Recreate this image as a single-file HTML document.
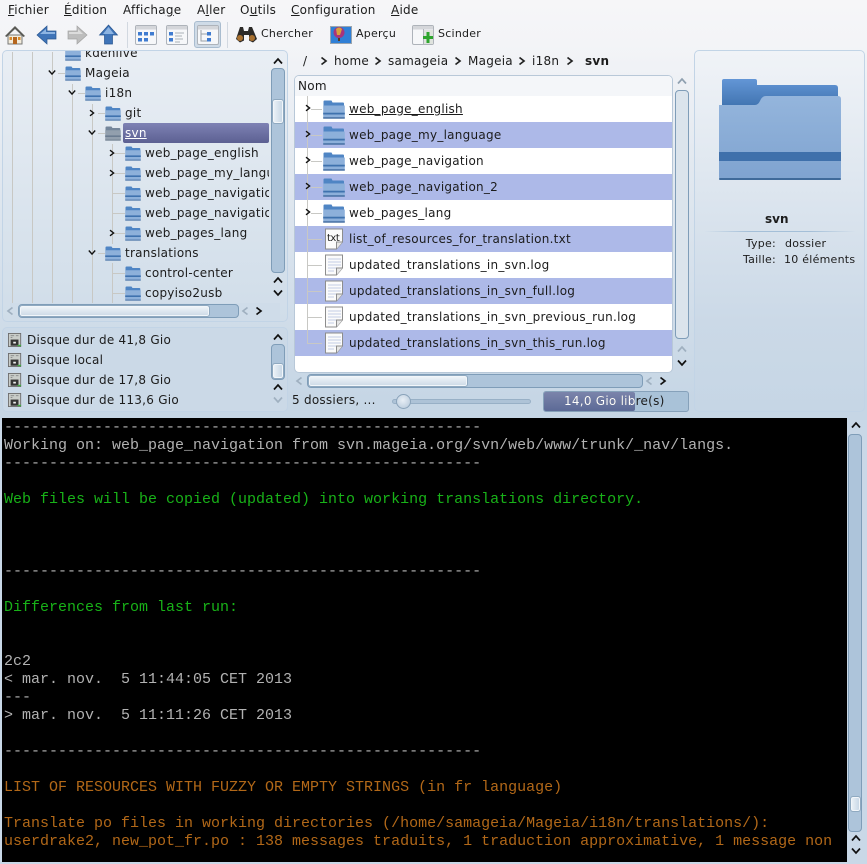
<!DOCTYPE html>
<html><head><meta charset="utf-8"><title>Dolphin</title>
<style>
html,body{margin:0;padding:0}
body{width:867px;height:864px;overflow:hidden;position:relative;background:#c9d8e7;font-family:"DejaVu Sans",sans-serif;font-size:12px;letter-spacing:.25px;color:#1c1c1c}
#bg{position:absolute;left:0;top:0;width:867px;height:420px;background:linear-gradient(#f6f6f8 0,#f3f4f7 45px,#e4eaf1 150px,#c6d6e5 400px)}
.t{position:absolute;white-space:nowrap;line-height:16px;height:16px}
.a{position:absolute}
u{text-decoration:underline}
.panel{position:absolute;border:1px solid #c2d4e6;border-radius:5px;box-sizing:border-box;overflow:hidden}
.track{position:absolute;background:#adc4da;border:1px solid #7f9db8;border-radius:4px;box-sizing:border-box}
.handle{position:absolute;background:linear-gradient(90deg,#e9f0f6,#c9d8e6);border:1px solid #f2f6fa;outline:1px solid #8fa9c0;border-radius:2px;box-sizing:border-box}
.hh{background:linear-gradient(#eef3f8,#cfdce8)}
.row{position:absolute;left:0;width:378px;height:26px}
.alt{background:#adb9e8}
.line{position:absolute;background:#c8c8c4}
.term{position:absolute;left:4px;white-space:pre;font-family:"Liberation Mono",monospace;font-size:15px;letter-spacing:0;line-height:18px;height:18px;color:#b2b2b2}
.g{color:#18b218}.o{color:#b26818}
svg{position:absolute;overflow:visible}
</style></head><body>
<div id="bg"></div>
<svg width="0" height="0" style="position:absolute">
<defs>
<linearGradient id="fg" x1="0" y1="0" x2="0" y2="1"><stop offset="0" stop-color="#94b5dc"/><stop offset="1" stop-color="#7fa3d0"/></linearGradient>
<linearGradient id="bk" x1="0" y1="0" x2="0" y2="1"><stop offset="0" stop-color="#6396d6"/><stop offset="1" stop-color="#3f72ae"/></linearGradient>
<symbol id="f" viewBox="0 0 16 16"><path d="M0.5 2.5q0-1 1-1h5l1 1.5h7q.8 0 .8 .8V6H0.5z" fill="#4f85c4"/><path d="M0.2 5.2h15.6v9.6q0 .8-.8.8H1q-.8 0-.8-.8z" fill="#8db0da"/><rect x=".2" y="10.4" width="15.6" height="1.6" fill="#3f72ae"/><rect x=".2" y="14.6" width="15.6" height="1" fill="#4e76a6"/></symbol>
<symbol id="fb" viewBox="0 0 22 22"><path d="M.5 3.5q0-1 1-1h7l1 2h10.500q1 0 1 1V8H.5z" fill="#4f85c4"/><path d="M.2 7.500h21.600v12q0 1-1 1H1.200q-1 0-1-1z" fill="#8db0da"/><rect x=".2" y="14.700" width="21.600" height="1.800" fill="#3f72ae"/><rect x=".2" y="19.300" width="21.600" height="1.400" fill="#3f6a9e"/></symbol>
<symbol id="d" viewBox="0 0 20 22"><path d="M1.500 1h17v13l-6 7h-11z" fill="#fbfbfb" stroke="#8d8d8d"/><path d="M4 5h13M4 8h13M4 11h13M4 14h8M4 17h6" stroke="#c3cde6"/><path d="M12.500 21v-7h6" fill="#e6e6e6" stroke="#8d8d8d"/></symbol>
<symbol id="h" viewBox="0 0 16 16"><rect x=".5" y=".5" width="14" height="15" fill="#c9ccc8" stroke="#6a6a6a"/><rect x="3" y="7.500" width="9" height="7" fill="#333"/><rect x="6" y="10" width="3" height="2" fill="#eee"/><rect x="11" y="13.500" width="4" height="1.500" fill="#3fae3f"/><path d="M3 3h4M9 3h3M3 5h2" stroke="#888"/></symbol>
<symbol id="v" viewBox="0 0 22 20"><rect x=".5" y=".5" width="21" height="19" rx="1.500" fill="#f6f7f9" stroke="#aeb3ba"/><rect x="1" y="1" width="20" height="3.500" fill="#d4d6da"/></symbol>
<symbol id="r" viewBox="0 0 8 10"><path d="M1.500 1.500L6 5L1.500 8.500" fill="none" stroke="currentColor" stroke-width="1.700"/></symbol>
<symbol id="l" viewBox="0 0 8 10"><path d="M6.500 1.500L2 5L6.500 8.500" fill="none" stroke="currentColor" stroke-width="1.700"/></symbol>
<symbol id="u" viewBox="0 0 10 8"><path d="M1 6.500L5 2L9 6.500" fill="none" stroke="currentColor" stroke-width="1.700"/></symbol>
<symbol id="n" viewBox="0 0 10 8"><path d="M1 1.500L5 6L9 1.500" fill="none" stroke="currentColor" stroke-width="1.700"/></symbol>
</defs></svg>

<!-- menu -->
<div class="t" style="left:8px;top:2px"><u>F</u>ichier</div>
<div class="t" style="left:64px;top:2px"><u>É</u>dition</div>
<div class="t" style="left:123px;top:2px">Afficha<u>g</u>e</div>
<div class="t" style="left:197px;top:2px">A<u>l</u>ler</div>
<div class="t" style="left:240px;top:2px">O<u>u</u>tils</div>
<div class="t" style="left:291px;top:2px"><u>C</u>onfiguration</div>
<div class="t" style="left:391px;top:2px"><u>A</u>ide</div>

<!-- toolbar -->
<svg style="left:5px;top:25px" width="20" height="20" viewBox="0 0 20 20"><path d="M3 10h14v9H3z" fill="#f3ecdc" stroke="#777"/><path d="M0 11L10 1l10 10-1.500 1L10 4 1.500 12z" fill="#5a5a55"/><rect x="8" y="12" width="4" height="7" fill="#b5651d"/><rect x="4.500" y="12" width="2.500" height="3" fill="#d98a2c"/><rect x="13" y="12" width="2.500" height="3" fill="#d98a2c"/></svg>
<svg style="left:37px;top:26px" width="19" height="18" viewBox="0 0 19 18"><path d="M0 9L10 0v5h9v8h-9v5z" fill="#3f74b8" stroke="#28558f" stroke-width=".7"/><path d="M3 8L9 3v3h9v2z" fill="#8db4e2"/></svg>
<svg style="left:68px;top:26px" width="19" height="18" viewBox="0 0 19 18"><path d="M19 9L9 0v5H0v8h9v5z" fill="#bdbdbd" stroke="#a3a3a3" stroke-width=".7"/><path d="M1 6h9V3l5 5H1z" fill="#dcdcdc"/></svg>
<svg style="left:99px;top:25px" width="19" height="19" viewBox="0 0 19 19"><path d="M9.500 0L18.500 10h-5v9h-8v-9h-5z" fill="#3f74b8" stroke="#28558f" stroke-width=".7"/><path d="M9.500 2L15 9H4z" fill="#8db4e2"/></svg>
<div class="a" style="left:127px;top:22px;width:1px;height:26px;background:#d2d8e0"></div>

<svg style="left:135px;top:25px" width="22" height="20"><use href="#v" width="22" height="20"/><g fill="#3f7bd0"><rect x="3" y="7" width="4" height="3.500"/><rect x="9" y="7" width="4" height="3.500"/><rect x="15" y="7" width="4" height="3.500"/><rect x="3" y="13" width="4" height="3.500"/><rect x="9" y="13" width="4" height="3.500"/></g></svg>
<svg style="left:166px;top:25px" width="22" height="20"><use href="#v" width="22" height="20"/><g fill="#3f7bd0"><rect x="3" y="7" width="4" height="3.500"/><rect x="3" y="13" width="4" height="3.500"/></g><path d="M9 8h9M9 11h7M9 14h8M9 17h5" stroke="#aab0b8"/></svg>
<div class="a" style="left:194px;top:21px;width:27px;height:27px;box-sizing:border-box;background:#cfdbe7;border:1px solid #a9bccf;border-radius:3px"></div>
<svg style="left:197px;top:25px" width="22" height="20"><use href="#v" width="22" height="20"/><path d="M4 5v11h7M4 9h7" fill="none" stroke="#9aa0a8"/><g fill="#3f7bd0"><rect x="10" y="7" width="4" height="3.500"/><rect x="10" y="13" width="4" height="3.500"/></g></svg>
<div class="a" style="left:227px;top:22px;width:1px;height:26px;background:#d2d8e0"></div>

<svg style="left:235px;top:26px" width="22" height="17" viewBox="0 0 22 17"><path d="M5 1h3l1 4h4l1-4h3l5 12-4 3.500-4-2V9H9v5.500l-4 2-4-3.500z" fill="#2c2a28"/><circle cx="5" cy="12" r="3" fill="#a8702f"/><circle cx="17" cy="12" r="3" fill="#a8702f"/></svg>
<div class="t" style="left:261px;top:26px;font-size:11px">Chercher</div>
<svg style="left:330px;top:26px" width="22" height="18" viewBox="0 0 22 18"><rect x=".5" y=".5" width="21" height="17" fill="#2f7fd6" stroke="#9aa4ae"/><circle cx="9" cy="6.500" r="5.500" fill="#a8347c"/><path d="M6 3q3-3 6 0l-2 6H7z" fill="#d8a03c"/><rect x="8" y="12" width="2" height="3" fill="#5a3a1c"/></svg>
<div class="t" style="left:356px;top:26px;font-size:11px">Aperçu</div>
<svg style="left:412px;top:25px" width="22" height="20" viewBox="0 0 22 20"><use href="#v" width="22" height="20"/><rect x="11" y="5" width="10" height="14" fill="#dfe3de"/><path d="M11.500 4v15" stroke="#aeb3ba"/><path d="M16 7v11M11 12.500h10" stroke="#2ea52e" stroke-width="3"/></svg>
<div class="t" style="left:438px;top:26px;font-size:11px">Scinder</div>

<!-- tree panel -->
<div class="panel" style="left:2px;top:50px;width:286px;height:272px;background:linear-gradient(#e9eef4,#d0dde9)">
<div class="a" style="left:-3px;top:-51px;width:286px;height:360px">
<div class="line" style="left:12px;top:52px;width:1px;height:252px"></div>
<div class="line" style="left:32px;top:52px;width:1px;height:252px"></div>
<div class="line" style="left:52px;top:52px;width:1px;height:252px"></div>
<div class="line" style="left:72px;top:84px;width:1px;height:220px"></div>
<div class="line" style="left:92px;top:104px;width:1px;height:200px"></div>
<div class="line" style="left:112px;top:144px;width:1px;height:100px"></div>
<div class="line" style="left:112px;top:263px;width:1px;height:41px"></div>
<div class="line" style="left:58px;top:73px;width:7px;height:1px"></div>
<div class="line" style="left:78px;top:93px;width:7px;height:1px"></div>
<div class="line" style="left:98px;top:113px;width:7px;height:1px"></div>
<div class="line" style="left:98px;top:133px;width:7px;height:1px"></div>
<div class="line" style="left:98px;top:253px;width:7px;height:1px"></div>
<div class="line" style="left:112px;top:153px;width:13px;height:1px"></div>
<div class="line" style="left:112px;top:173px;width:13px;height:1px"></div>
<div class="line" style="left:112px;top:193px;width:13px;height:1px"></div>
<div class="line" style="left:112px;top:213px;width:13px;height:1px"></div>
<div class="line" style="left:112px;top:233px;width:13px;height:1px"></div>
<div class="line" style="left:112px;top:273px;width:13px;height:1px"></div>
<div class="line" style="left:112px;top:293px;width:13px;height:1px"></div>

<div class="a" style="left:123px;top:123px;width:146px;height:20px;background:linear-gradient(#7e82b4,#5c6092);border-radius:2px"></div>

<svg style="left:65px;top:45px" width="16" height="16"><use href="#f" width="16" height="16"/></svg><div class="t" style="left:85px;top:45px">kdenlive</div>
<svg style="left:65px;top:65px" width="16" height="16"><use href="#f" width="16" height="16"/></svg><div class="t" style="left:85px;top:65px">Mageia</div>
<svg style="left:85px;top:85px" width="16" height="16"><use href="#f" width="16" height="16"/></svg><div class="t" style="left:105px;top:85px">i18n</div>
<svg style="left:105px;top:105px" width="16" height="16"><use href="#f" width="16" height="16"/></svg><div class="t" style="left:125px;top:105px">git</div>
<svg style="left:105px;top:125px;opacity:.72;filter:grayscale(.45) brightness(.75)" width="16" height="16"><use href="#f" width="16" height="16"/></svg><div class="t" style="left:125px;top:125px;color:#fff"><u>svn</u></div>
<svg style="left:125px;top:145px" width="16" height="16"><use href="#f" width="16" height="16"/></svg><div class="t" style="left:145px;top:145px">web_page_english</div>
<svg style="left:125px;top:165px" width="16" height="16"><use href="#f" width="16" height="16"/></svg><div class="t" style="left:145px;top:165px;width:124px;overflow:hidden">web_page_my_language</div>
<svg style="left:125px;top:185px" width="16" height="16"><use href="#f" width="16" height="16"/></svg><div class="t" style="left:145px;top:185px;width:124px;overflow:hidden">web_page_navigation</div>
<svg style="left:125px;top:205px" width="16" height="16"><use href="#f" width="16" height="16"/></svg><div class="t" style="left:145px;top:205px;width:124px;overflow:hidden">web_page_navigation_2</div>
<svg style="left:125px;top:225px" width="16" height="16"><use href="#f" width="16" height="16"/></svg><div class="t" style="left:145px;top:225px">web_pages_lang</div>
<svg style="left:105px;top:245px" width="16" height="16"><use href="#f" width="16" height="16"/></svg><div class="t" style="left:125px;top:245px">translations</div>
<svg style="left:125px;top:265px" width="16" height="16"><use href="#f" width="16" height="16"/></svg><div class="t" style="left:145px;top:265px">control-center</div>
<svg style="left:125px;top:285px" width="16" height="16"><use href="#f" width="16" height="16"/></svg><div class="t" style="left:145px;top:285px">copyiso2usb</div>

<svg style="left:48px;top:69px" width="8" height="7" color="#111"><use href="#n" width="8" height="7"/></svg>
<svg style="left:68px;top:89px" width="8" height="7" color="#111"><use href="#n" width="8" height="7"/></svg>
<svg style="left:88px;top:109px" width="8" height="8" color="#111"><use href="#r" width="8" height="8"/></svg>
<svg style="left:88px;top:129px" width="8" height="7" color="#111"><use href="#n" width="8" height="7"/></svg>
<svg style="left:108px;top:149px" width="8" height="8" color="#111"><use href="#r" width="8" height="8"/></svg>
<svg style="left:108px;top:169px" width="8" height="8" color="#111"><use href="#r" width="8" height="8"/></svg>
<svg style="left:108px;top:229px" width="8" height="8" color="#111"><use href="#r" width="8" height="8"/></svg>
<svg style="left:88px;top:249px" width="8" height="7" color="#111"><use href="#n" width="8" height="7"/></svg>

<div class="a" style="left:10px;top:303px;width:270px;height:18px;background:#cfdce9"></div>
</div></div>
<svg style="left:273px;top:57px" width="10" height="8" color="#111"><use href="#u" width="10" height="8"/></svg>
<div class="track" style="left:271px;top:68px;width:14px;height:205px"></div>
<div class="handle" style="left:273px;top:100px;width:10px;height:23px"></div>
<svg style="left:273px;top:276px" width="10" height="8" color="#111"><use href="#u" width="10" height="8"/></svg>
<svg style="left:273px;top:289px" width="10" height="8" color="#111"><use href="#n" width="10" height="8"/></svg>
<svg style="left:6px;top:306px" width="8" height="10" color="#9fb0c0"><use href="#l" width="8" height="10"/></svg>
<div class="track" style="left:18px;top:304px;width:221px;height:14px"></div>
<div class="handle hh" style="left:20px;top:306px;width:189px;height:10px"></div>
<svg style="left:241px;top:306px" width="8" height="10" color="#9fb0c0"><use href="#l" width="8" height="10"/></svg>
<svg style="left:255px;top:306px" width="8" height="10" color="#111"><use href="#r" width="8" height="10"/></svg>

<!-- places -->
<div class="panel" style="left:2px;top:327px;width:286px;height:85px;background:#cbd9e7"></div>
<svg style="left:8px;top:332px" width="14" height="16"><use href="#h" width="14" height="16"/></svg><div class="t" style="left:27px;top:332px">Disque dur de 41,8 Gio</div>
<svg style="left:8px;top:352px" width="14" height="16"><use href="#h" width="14" height="16"/></svg><div class="t" style="left:27px;top:352px">Disque local</div>
<svg style="left:8px;top:372px" width="14" height="16"><use href="#h" width="14" height="16"/></svg><div class="t" style="left:27px;top:372px">Disque dur de 17,8 Gio</div>
<svg style="left:8px;top:392px" width="14" height="16"><use href="#h" width="14" height="16"/></svg><div class="t" style="left:27px;top:392px">Disque dur de 113,6 Gio</div>
<svg style="left:273px;top:333px" width="10" height="8" color="#111"><use href="#u" width="10" height="8"/></svg>
<div class="track" style="left:271px;top:344px;width:14px;height:36px"></div>
<div class="handle" style="left:273px;top:364px;width:10px;height:14px"></div>
<svg style="left:273px;top:383px" width="10" height="8" color="#111"><use href="#u" width="10" height="8"/></svg>
<svg style="left:273px;top:396px" width="10" height="8" color="#9fb0c0"><use href="#n" width="10" height="8"/></svg>

<!-- breadcrumb -->
<div class="t" style="left:303px;top:53px">/</div>
<svg style="left:320px;top:56px" width="8" height="10" color="#222"><use href="#r" width="8" height="10"/></svg>
<div class="t" style="left:334px;top:53px">home</div>
<svg style="left:374px;top:56px" width="8" height="10" color="#222"><use href="#r" width="8" height="10"/></svg>
<div class="t" style="left:388px;top:53px">samageia</div>
<svg style="left:454px;top:56px" width="8" height="10" color="#222"><use href="#r" width="8" height="10"/></svg>
<div class="t" style="left:468px;top:53px">Mageia</div>
<svg style="left:518px;top:56px" width="8" height="10" color="#222"><use href="#r" width="8" height="10"/></svg>
<div class="t" style="left:532px;top:53px">i18n</div>
<svg style="left:566px;top:56px" width="8" height="10" color="#222"><use href="#r" width="8" height="10"/></svg>
<div class="t" style="left:585px;top:53px;font-weight:bold">svn</div>

<!-- file list -->
<div class="panel" style="left:294px;top:75px;width:379px;height:298px;background:#fff;border-color:#b8c8d8">
<div class="a" style="left:0;top:0;width:378px;height:20px;background:#f4f6f9"></div>
<div class="t" style="left:3px;top:2px">Nom</div>
<div class="row" style="top:20px"></div>
<div class="row alt" style="top:46px"></div>
<div class="row" style="top:72px"></div>
<div class="row alt" style="top:98px"></div>
<div class="row" style="top:124px"></div>
<div class="row alt" style="top:150px"></div>
<div class="row" style="top:176px"></div>
<div class="row alt" style="top:202px"></div>
<div class="row" style="top:228px"></div>
<div class="row alt" style="top:254px"></div>
<div class="line" style="left:12px;top:20px;width:1px;height:247px"></div>
<div class="line" style="left:16px;top:33px;width:11px;height:1px"></div>
<div class="line" style="left:16px;top:59px;width:11px;height:1px"></div>
<div class="line" style="left:16px;top:85px;width:11px;height:1px"></div>
<div class="line" style="left:16px;top:111px;width:11px;height:1px"></div>
<div class="line" style="left:16px;top:137px;width:11px;height:1px"></div>
<div class="line" style="left:12px;top:163px;width:15px;height:1px"></div>
<div class="line" style="left:12px;top:189px;width:15px;height:1px"></div>
<div class="line" style="left:12px;top:215px;width:15px;height:1px"></div>
<div class="line" style="left:12px;top:241px;width:15px;height:1px"></div>
<div class="line" style="left:12px;top:267px;width:15px;height:1px"></div>
</div>
<svg style="left:304px;top:104px" width="8" height="8" color="#111"><use href="#r" width="8" height="8"/></svg>
<svg style="left:304px;top:130px" width="8" height="8" color="#111"><use href="#r" width="8" height="8"/></svg>
<svg style="left:304px;top:156px" width="8" height="8" color="#111"><use href="#r" width="8" height="8"/></svg>
<svg style="left:304px;top:182px" width="8" height="8" color="#111"><use href="#r" width="8" height="8"/></svg>
<svg style="left:304px;top:208px" width="8" height="8" color="#111"><use href="#r" width="8" height="8"/></svg>
<svg style="left:323px;top:98px" width="22" height="22"><use href="#fb" width="22" height="22"/></svg>
<svg style="left:323px;top:124px" width="22" height="22"><use href="#fb" width="22" height="22"/></svg>
<svg style="left:323px;top:150px" width="22" height="22"><use href="#fb" width="22" height="22"/></svg>
<svg style="left:323px;top:176px" width="22" height="22"><use href="#fb" width="22" height="22"/></svg>
<svg style="left:323px;top:202px" width="22" height="22"><use href="#fb" width="22" height="22"/></svg>
<svg style="left:324px;top:228px" width="20" height="22"><path d="M1.500 1h17v13l-6 7h-11z" fill="#fbfbfb" stroke="#8d8d8d"/><path d="M12.500 21v-7h6" fill="#e6e6e6" stroke="#8d8d8d"/></svg>
<div class="t" style="left:327px;top:231px;font-size:10px;letter-spacing:-.5px">txt</div>
<svg style="left:324px;top:254px" width="20" height="22"><use href="#d" width="20" height="22"/></svg>
<svg style="left:324px;top:280px" width="20" height="22"><use href="#d" width="20" height="22"/></svg>
<svg style="left:324px;top:306px" width="20" height="22"><use href="#d" width="20" height="22"/></svg>
<svg style="left:324px;top:332px" width="20" height="22"><use href="#d" width="20" height="22"/></svg>
<div class="t" style="left:349px;top:101px"><u>web_page_english</u></div>
<div class="t" style="left:349px;top:127px">web_page_my_language</div>
<div class="t" style="left:349px;top:153px">web_page_navigation</div>
<div class="t" style="left:349px;top:179px">web_page_navigation_2</div>
<div class="t" style="left:349px;top:205px">web_pages_lang</div>
<div class="t" style="left:349px;top:231px">list_of_resources_for_translation.txt</div>
<div class="t" style="left:349px;top:257px">updated_translations_in_svn.log</div>
<div class="t" style="left:349px;top:283px">updated_translations_in_svn_full.log</div>
<div class="t" style="left:349px;top:309px">updated_translations_in_svn_previous_run.log</div>
<div class="t" style="left:349px;top:335px">updated_translations_in_svn_this_run.log</div>

<svg style="left:677px;top:77px" width="10" height="8" color="#8fa0b0"><use href="#u" width="10" height="8"/></svg>
<div class="track" style="left:675px;top:90px;width:14px;height:249px;background:#dbe4ec"></div>
<svg style="left:677px;top:345px" width="10" height="8" color="#9fb0c0"><use href="#u" width="10" height="8"/></svg>
<svg style="left:677px;top:359px" width="10" height="8" color="#111"><use href="#n" width="10" height="8"/></svg>
<svg style="left:295px;top:376px" width="8" height="10" color="#9fb0c0"><use href="#l" width="8" height="10"/></svg>
<div class="track" style="left:307px;top:374px;width:336px;height:14px"></div>
<div class="handle hh" style="left:309px;top:376px;width:158px;height:10px"></div>
<svg style="left:645px;top:376px" width="8" height="10" color="#9fb0c0"><use href="#l" width="8" height="10"/></svg>
<svg style="left:659px;top:376px" width="8" height="10" color="#111"><use href="#r" width="8" height="10"/></svg>

<!-- status -->
<div class="t" style="left:292px;top:392px">5 dossiers, ...</div>
<div class="a" style="left:392px;top:399px;width:139px;height:5px;background:#aec3d7;border:1px solid #98b0c6;border-radius:3px;box-sizing:border-box"></div>
<div class="a" style="left:396px;top:394px;width:15px;height:15px;border-radius:50%;background:radial-gradient(circle at 45% 40%,#e8eff6,#b3c6d8);border:1px solid #8aa3ba;box-sizing:border-box"></div>
<div class="a" style="left:543px;top:391px;width:146px;height:21px;background:#a9c2d8;border:1px solid #86a1ba;border-radius:3px;box-sizing:border-box"></div>
<div class="a" style="left:544px;top:392px;width:91px;height:19px;background:linear-gradient(#7b84ab,#5c6a96);border-radius:2px"></div>
<div class="a" style="left:543px;top:393px;width:146px;height:16px;overflow:hidden"><div class="t" style="left:21px;top:0;color:#1c1c1c">14,0 Gio libre(s)</div></div>
<div class="a" style="left:543px;top:393px;width:92px;height:16px;overflow:hidden"><div class="t" style="left:21px;top:0;color:#fff">14,0 Gio libre(s)</div></div>

<!-- info -->
<div class="panel" style="left:694px;top:50px;width:171px;height:362px;background:linear-gradient(#f0f3f7,#cbd9e7 75%,#c6d6e5)"></div>
<svg style="left:719px;top:79px" width="122" height="102" viewBox="0 0 122 102"><path d="M3 2q0-2 2-2h31q2 0 2 2v4h78q3 0 3 3v20H3z" fill="url(#bk)"/><path d="M0 26h36q3 0 5-4q2-5 6-5h72q3 0 3 3v78q0 3-3 3H3q-3 0-3-3z" fill="url(#fg)"/><rect y="73" width="122" height="9" fill="#3f70ab"/><rect y="99" width="122" height="2" rx="1" fill="#3f6a9a"/></svg>
<div class="t" style="left:765px;top:211px;font-weight:bold;letter-spacing:0">svn</div>
<div class="a" style="left:704px;top:231px;width:152px;height:1px;background:linear-gradient(90deg,rgba(160,190,215,0),#a4bfd8 30%,#a4bfd8 70%,rgba(160,190,215,0))"></div>
<div class="t" style="left:696px;top:236px;width:80px;text-align:right;font-size:11px">Type:</div>
<div class="t" style="left:785px;top:236px;font-size:11px">dossier</div>
<div class="t" style="left:696px;top:252px;width:80px;text-align:right;font-size:11px">Taille:</div>
<div class="t" style="left:784px;top:252px;font-size:11px">10 éléments</div>

<!-- terminal -->
<div class="a" style="left:2px;top:418px;width:845px;height:444px;background:#000;overflow:hidden"></div>
<div class="term" style="top:419px">-----------------------------------------------------</div>
<div class="term" style="top:437px">Working on: web_page_navigation from svn.mageia.org/svn/web/www/trunk/_nav/langs.</div>
<div class="term" style="top:455px">-----------------------------------------------------</div>
<div class="term g" style="top:491px">Web files will be copied (updated) into working translations directory.</div>
<div class="term" style="top:563px">-----------------------------------------------------</div>
<div class="term g" style="top:599px">Differences from last run:</div>
<div class="term" style="top:653px">2c2</div>
<div class="term" style="top:671px">&lt; mar. nov.  5 11:44:05 CET 2013</div>
<div class="term" style="top:689px">---</div>
<div class="term" style="top:707px">&gt; mar. nov.  5 11:11:26 CET 2013</div>
<div class="term" style="top:743px">-----------------------------------------------------</div>
<div class="term o" style="top:779px">LIST OF RESOURCES WITH FUZZY OR EMPTY STRINGS (in fr language)</div>
<div class="term o" style="top:815px">Translate po files in working directories (/home/samageia/Mageia/i18n/translations/):</div>
<div class="term o" style="top:833px">userdrake2, new_pot_fr.po : 138 messages traduits, 1 traduction approximative, 1 message non</div>

<svg style="left:851px;top:421px" width="10" height="8" color="#111"><use href="#u" width="10" height="8"/></svg>
<div class="track" style="left:848px;top:434px;width:14px;height:398px"></div>
<div class="handle" style="left:851px;top:797px;width:9px;height:14px"></div>
<svg style="left:851px;top:834px" width="10" height="8" color="#111"><use href="#u" width="10" height="8"/></svg>
<svg style="left:851px;top:847px" width="10" height="8" color="#111"><use href="#n" width="10" height="8"/></svg>
</body></html>
